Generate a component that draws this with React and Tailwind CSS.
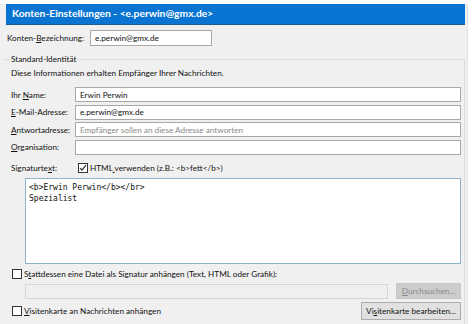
import React from "react"

const font = { fontFamily: 'Lato, "Noto Sans", sans-serif' }

function Check({ checked }) {
  return (
    <span className="inline-flex w-[10px] h-[10px] border border-[#333] bg-white items-center justify-center shrink-0">
      {checked && (
        <svg width="8" height="8" viewBox="0 0 8 8">
          <path d="M1 4 L3 6.2 L7 1.2" fill="none" stroke="#222" strokeWidth="1.1" />
        </svg>
      )}
    </span>
  )
}

function Row({ label, u, rest, value, placeholder }) {
  return (
    <div className="flex items-center h-[17.6px]">
      <div className="w-[64px] shrink-0 whitespace-nowrap text-[8.2px] text-[#111]">
        {label}<span className="underline">{u}</span>{rest}
      </div>
      <div className="flex-1 h-[15px] border border-[#a8a8a8] bg-white px-[4px] flex items-center whitespace-nowrap text-[8.2px] text-[#111]">
        {value ? value : <span className="text-[#8a8a8a]">{placeholder}</span>}
      </div>
    </div>
  )
}

export default function App() {
  return (
    <div className="w-[474px] h-[324px] bg-white pt-[4px] overflow-hidden" style={font}>
      <div className="w-[468px] h-[320px] bg-[#f0f0f0] border-r border-[#e2e2e2] flex flex-col">
        {/* Title */}
        <div className="ml-[6px] w-[459px] h-[21px] shrink-0 bg-[#0a74d2] border-b border-[#1d5a96] flex items-center pl-[6px] whitespace-nowrap text-[10.3px] font-bold text-white">
          Konten-Einstellungen - &lt;e.perwin@gmx.de&gt;
        </div>

        {/* Account name */}
        <div className="flex items-center mt-[5px] pl-[7px] h-[16px]">
          <div className="w-[83px] shrink-0 whitespace-nowrap text-[8.2px] text-[#111]">
            Konten-<span className="underline">B</span>ezeichnung:
          </div>
          <div className="w-[122px] h-[16px] border border-[#a8a8a8] bg-white px-[4px] flex items-center whitespace-nowrap text-[8.2px] text-[#111]">
            e.perwin@gmx.de
          </div>
        </div>

        {/* Group */}
        <div className="mt-[13px] ml-[4px] mr-[2px] border-t border-r border-[#dcdcdc] pl-[7px] pr-[3px] flex-1 flex flex-col">
          <div className="text-[8.2px] text-[#111] -mt-[7px] bg-[#f0f0f0] self-start pr-[2px] leading-[13px] whitespace-nowrap">
            Standard-Identität
          </div>
          <div className="text-[8.2px] text-[#111] mt-[1px] leading-[13px] whitespace-nowrap">
            Diese Informationen erhalten Empfänger Ihrer Nachrichten.
          </div>

          <div className="mt-[6px] flex flex-col">
            <Row label="Ihr " u="N" rest="ame:" value="Erwin Perwin" />
            <Row label="" u="E" rest="-Mail-Adresse:" value="e.perwin@gmx.de" />
            <Row label="" u="A" rest="ntwortadresse:" placeholder="Empfänger sollen an diese Adresse antworten" />
            <Row label="" u="O" rest="rganisation:" />
          </div>

          <div className="flex items-center mt-[5px] h-[14px] whitespace-nowrap">
            <div className="w-[67px] shrink-0 text-[8.2px] text-[#111]">
              Signaturte<span className="underline">x</span>t:
            </div>
            <Check checked />
            <span className="ml-[2px] text-[8.2px] text-[#111]">
              HTML<span className="underline"> </span>verwenden (z.B.: &lt;b&gt;fett&lt;/b&gt;)
            </span>
          </div>

          <div className="ml-[14px] mt-[3px] h-[86px] border border-[#8fb3c8] bg-white px-[3px] pt-[3px] text-[8px] leading-[11px] text-[#111] whitespace-pre" style={{ fontFamily: '"DejaVu Sans Mono", monospace' }}>
            <div>&lt;b&gt;Erwin Perwin&lt;/b&gt;&lt;/br&gt;</div>
            <div>Spezialist</div>
          </div>

          <div className="flex items-center mt-[3px] h-[14px] ml-[1px] whitespace-nowrap">
            <Check />
            <span className="ml-[2px] text-[8.2px] text-[#111]">
              S<span className="underline">t</span>attdessen eine Datei als Signatur anhängen (Text, HTML oder Grafik):
            </span>
          </div>

          <div className="flex items-center mt-[2px] ml-[14px] gap-[8px]">
            <div className="flex-1 h-[15px] border border-[#d6d6d6] bg-[#f0f0f0]" />
            <div className="w-[65px] h-[16px] border border-[#c8c8c8] bg-[#cccccc] flex items-center justify-center whitespace-nowrap text-[8.2px] text-[#8a8a8a]">
              <span className="underline">D</span>urchsuchen...
            </div>
          </div>

          <div className="flex items-center mt-[3px] ml-[1px] h-[18px] whitespace-nowrap">
            <Check />
            <span className="ml-[2px] text-[8.2px] text-[#111]">
              <span className="underline">V</span>isitenkarte an Nachrichten anhängen
            </span>
            <div className="ml-auto w-[100px] h-[18px] border border-[#adadad] bg-[#e1e1e1] flex items-center justify-center text-[8.2px] text-[#111]">
              Vi<span className="underline">s</span>itenkarte bearbeiten...
            </div>
          </div>
        </div>
      </div>
    </div>
  )
}
